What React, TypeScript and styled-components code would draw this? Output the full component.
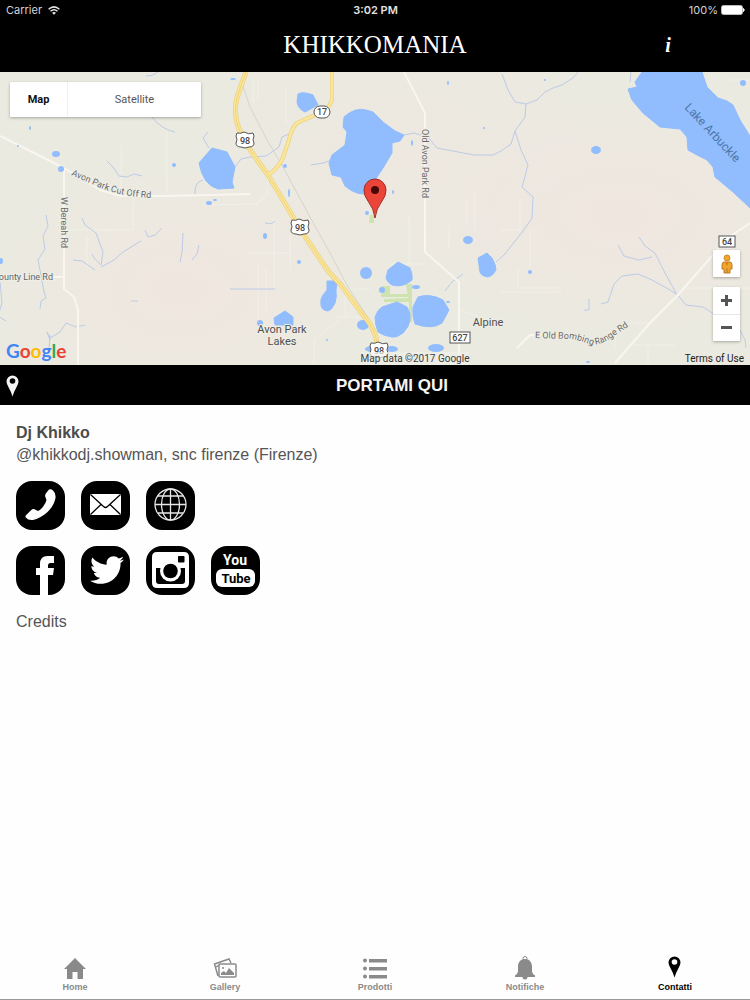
import React from "react";
import styled, { createGlobalStyle } from "styled-components";
import { FaTwitter } from "react-icons/fa";

const GlobalStyle = createGlobalStyle`
  *, *::before, *::after { box-sizing: border-box; }
  body { margin: 0; background: #fefefe; }
  button { font: inherit; color: inherit; border: 0; padding: 0; background: none; cursor: pointer; }
  a { color: inherit; text-decoration: none; }
  h1, h2, p, ul { margin: 0; padding: 0; }
  ul { list-style: none; }
  svg { display: block; }
`;

const helvetica = `"Liberation Sans", Arial, sans-serif`;
const roboto = `Roboto, "Liberation Sans", sans-serif`;

const Screen = styled.div`
  display: flex;
  flex-direction: column;
  min-height: 100vh;
  font-family: ${helvetica};
  color: #555;
  border-bottom: 1px solid #999;
`;

const Header = styled.header`
  background: #000;
  color: #fff;
`;

const StatusBar = styled.div`
  display: grid;
  grid-template-columns: 1fr auto 1fr;
  align-items: center;
  height: 20px;
  padding: 0 5px 0 6px;
  font: 400 11px/20px Inter, ${helvetica};
  color: #d4d4d4;
`;

const StatusGroup = styled.div<{ $end?: boolean }>`
  display: flex;
  align-items: center;
  gap: ${(p) => (p.$end ? 3 : 6)}px;
  justify-content: ${(p) => (p.$end ? "flex-end" : "flex-start")};
`;

const Clock = styled.time`
  font-weight: 600;
  color: #e2e2e2;
`;

const TitleBar = styled.div`
  display: grid;
  grid-template-columns: 1fr auto 1fr;
  align-items: center;
  height: 52px;
  padding-bottom: 2px;
`;

const Title = styled.h1`
  grid-column: 2;
  font: 400 25px/48px "Liberation Serif", serif;
`;

const InfoButton = styled.button`
  justify-self: end;
  width: 24px;
  margin-right: 70px;
  && { font: italic 700 20px/48px "Liberation Serif", serif; }
`;

const MapArea = styled.section`
  position: relative;
  height: 293px;
  overflow: hidden;
  background: #ecebe2;
  font-family: ${roboto};
`;

const MapCanvas = styled.svg`
  width: 100%;
  height: 100%;
`;

const MapTypeSwitch = styled.div`
  position: absolute;
  top: 10px;
  left: 10px;
  display: flex;
  background: #fff;
  border-radius: 1px;
  box-shadow: 0 1px 3px rgba(0, 0, 0, 0.3);
`;

const MapTypeButton = styled.button<{ $active?: boolean }>`
  height: 35px;
  width: ${(p) => (p.$active ? 57 : 134)}px;
  && {
    font-size: 11px;
    font-weight: ${(p) => (p.$active ? 700 : 400)};
    color: ${(p) => (p.$active ? "#111" : "#555")};
  }
  & + & { border-left: 1px solid #f1eff3; }
`;

const MapControls = styled.div`
  position: absolute;
  right: 10px;
  bottom: 24px;
  display: flex;
  flex-direction: column;
  gap: 10px;
`;

const ControlGroup = styled.div`
  width: 27px;
  background: #fff;
  border-radius: 1px;
  box-shadow: 0 1px 3px rgba(0, 0, 0, 0.3);
`;

const ControlButton = styled.button`
  display: grid;
  place-items: center;
  width: 27px;
  height: 27px;
  & + & { box-shadow: inset 0 1px #e6e6e6; }
`;

const MapCredits = styled.div`
  position: absolute;
  left: 6px;
  right: 6px;
  bottom: 0;
  display: grid;
  grid-template-columns: 1fr auto 1fr;
  align-items: end;
  font-size: 10px;
  line-height: 13px;
  color: #3c3c3c;
`;

const MapLogo = styled.svg`
  width: 72px;
  height: 28px;
`;

const MapCopyright = styled.span`
  margin-left: 80px;
  background: rgba(240, 239, 233, 0.7);
`;

const MapTerms = styled.a`
  justify-self: end;
  color: #222;
`;

const DirectionsButton = styled.button`
  display: grid;
  grid-template-columns: 28px 1fr;
  align-items: center;
  width: 100%;
  height: 40px;
  padding: 1px 0 0 6px;
  && {
    background: #000;
    color: #f4f4f4;
    font: 700 17px/39px ${helvetica};
  }
`;

const Content = styled.main`
  flex: 1;
  padding: 17px 16px;
  font-size: 16px;
  line-height: 22px;
`;

const Name = styled.h2`
  font-size: 16px;
  line-height: 22px;
  color: #4c4c4c;
`;

const TileRow = styled.ul`
  display: flex;
  flex-wrap: wrap;
  gap: 16px;
  margin-bottom: 16px;
`;

const Address = styled.p`
  margin-bottom: 15px;
`;

const TileLink = styled.a`
  display: block;
  width: 49px;
  height: 49px;
  border-radius: 16px;
  overflow: hidden;
  background: #000;
  color: #fff;
`;

const CreditsLink = styled.a`
  display: inline-block;
`;

const TabBar = styled.nav`
  display: grid;
  grid-template-columns: repeat(5, 1fr);
  height: 49px;
`;

const Tab = styled.a<{ $active?: boolean }>`
  display: flex;
  flex-direction: column;
  align-items: center;
  gap: 1px;
  padding-top: 6px;
  font: 700 9px/12px ${helvetica};
  color: ${(p) => (p.$active ? "#000" : "#8a8a8a")};
`;

const streams = [
  "M146 76Q152 77 158 72",
  "M152 117Q161 129 175 132",
  "M107 161L113 167 119 176 127 177 134 174 142 176",
  "M209 148L203 138 208 132",
  "M235 167L241 159 250 157",
  "M195 195Q194 182 203 180",
  "M250 157L266 156 279 147 282 137 291 133",
  "M311 165L323 163 329 161",
  "M404 135L414 133 428 137 437 148 453 151 474 155 493 155 501 151 511 144 515 131 525 117 526 104 515 102 508 90 502 74",
  "M526 104L537 100 545 92 553 88 562 85 573 78 578 72",
  "M515 131L521 150 528 165 522 187 533 197 532 218 523 231 504 255 496 262",
  "M631 72L630 82",
  "M46 215L48 226 43 236 45 249 38 260 41 275 44 292 46 298 41 301 40 309",
  "M82 218L85 225 96 233 103 252 101 265 94 258 92 254",
  "M73 260L82 261 95 270",
  "M101 267L114 260 123 252 136 244 141 241",
  "M145 230L148 237 155 235 162 228",
  "M183 233L182 252 180 262",
  "M199 245L197 254 192 260",
  "M0 282L2 303 -2 316 6 321",
  "M50 340L47 332 50 338 60 332 66 323 76 327 85 325",
  "M50 335L49 350",
  "M131 301h7",
  "M230 289h45",
  "M265 223Q272 225 275 221",
  "M445 291L452 282 463 274",
  "M601 304L608 302 614 284 622 276 638 274 652 280 670 290 676 294",
  "M618 245L624 256 639 260 652 257",
  "M639 237L645 246 655 253 665 273 676 293 686 305 703 307 714 314",
  "M589 299V310h-5",
  "M740 330L745 340 746 348",
];

const minorRoads = [
  "M121 145V196M167 130V193M201 205L257 204 267 194 268 176",
  "M133 196V230H66",
  "M286 86V124M253 80V102M258 78V100",
  "M274 217V289M250 253H290M258 262V320M266 268V310M290 235V270",
  "M87 236V268",
  "M467 200V224M475 190V230M449 225V248",
  "M425 264H390M409 216V264",
  "M500 230H520V202M518 268V288H560V292H500",
  "M530 230V268",
  "M685 288H750M650 323H630M632 345H675M648 345V365M615 330V350",
  "M356 308L314 339V365M335 317H365M340 289H370M345 295V315",
  "M458 310L480 317M730 80h20",
];

const mainRoads = [
  "M0 136L64 168 100 190 121 196 166 196 250 194",
  "M64 168V289L74 297 78 310V365",
  "M53 277H64",
  "M404 72L425 113V252L459 282V365",
  "M750 223L726 239 712 256 677 296 650 323 615 363",
  "M517 348L530 335 545 334",
];

const lakes = [
  "M212 148L227 152 235 167 232 182 234 188 218 189Q203 185 199 163Z",
  "M298 94Q303 91 313 95L318 105 305 112Q298 109 297 102Z",
  "M344 117Q355 107 366 110L373 112 383 122 395 131 404 135 400 141 392 143 392 153 383 168 377 177 373 187 370 193Q358 197 345 186L341 177 332 175 329 163 332 155 345 145 347 132 343 127Z",
  "M642 72L635 82 637 87 628 89 632 100 643 113 660 127 680 129 687 137 688 150 697 155 707 160 713 167 715 177 733 192 750 208V136L740 120 733 105 727 101 718 98 707 87 702 72Z",
  "M398 262L410 268Q413 275 412 280Q403 288 392 285Q387 282 386 278L388 270Z",
  "M397 302L407 307Q411 313 410 320Q409 327 403 333Q397 338 392 337Q384 336 378 332Q375 324 375 317Q378 309 382 307Z",
  "M418 297Q430 293 443 300L449 310 442 323Q432 330 415 324Q412 316 413 307Z",
  "M327 281H337L336 290Q337 297 335 303Q332 310 328 311Q321 310 321 305Q320 299 323 295L327 290Z",
  "M274 318L285 311 293 317V325H275Z",
  "M478 258L487 253 492 258Q496 265 496 270Q493 276 488 277Q481 276 480 272Z",
];

const ponds: [number, number, number, number][] = [
  [366, 273, 6, 6], [363, 325, 6, 5], [468, 240, 5, 4], [265, 236, 2, 3], [299, 262, 2, 2],
  [436, 348, 8, 4], [372, 349, 7, 3], [392, 349, 6, 3], [260, 323, 3, 3], [596, 150, 5, 4],
  [743, 83, 3, 3], [56, 154, 4, 3], [61, 169, 3, 3], [174, 165, 2, 2], [209, 203, 3, 2],
  [215, 200, 2, 1], [30, 128, 1, 2], [18, 146, 1, 1], [1, 261, 2, 3], [382, 290, 3, 3],
  [416, 287, 4, 2], [289, 193, 1, 4], [285, 166, 2, 2], [393, 192, 1, 2], [367, 213, 2, 2],
  [412, 143, 1, 3], [448, 83, 1, 2], [484, 128, 1, 1], [530, 272, 2, 2], [233, 79, 3, 1],
  [545, 80, 1, 1], [588, 362, 2, 1], [448, 302, 2, 1], [327, 340, 1, 1],
];

function UsShield({ x, y }: { x: number; y: number }) {
  return (
    <g transform={`translate(${x} ${y})`}>
      <path d="M-8-7Q-4-6-1-8Q4-5 8-7L9-4Q7 0 9 3Q9 7 4 7L0 8L-4 7Q-9 7-9 3Q-7 0-9-4Z" fill="#fff" stroke="#555" strokeWidth="1" />
      <text y="4" textAnchor="middle" fontSize="9" fontWeight="500" fill="#444">98</text>
    </g>
  );
}

function RoadBox({ x, y, w, label }: { x: number; y: number; w: number; label: string }) {
  return (
    <g>
      <rect x={x} y={y} width={w} height="11" fill="#fff" stroke="#555" />
      <text x={x + w / 2} y={y + 9} textAnchor="middle" fontSize="9" fontWeight="500" fill="#444">{label}</text>
    </g>
  );
}

function MapDrawing() {
  const highway98 = "M246 72Q240 88 237 98Q233 114 239 129Q246 146 268 175L293 217 306 238 328 271 341 285 363 315Q373 326 376 338L378 350";
  const highway17 = "M332 72V98Q332 106 322 112L297 123Q291 129 289 140L282 160Q276 170 268 175";
  return (
    <MapCanvas viewBox="0 72 750 293" preserveAspectRatio="xMidYMid slice" role="img" aria-label="Map of Avon Park Lakes">
      <defs>
        <radialGradient id="rose">
          <stop offset="0" stopColor="#f0e6e0" />
          <stop offset="1" stopColor="#f0e6e0" stopOpacity="0" />
        </radialGradient>
        <path id="avonPath" d="M71 175L92 184Q118 197 154 198" />
        <path id="rangePath" d="M535 338L572 339Q582 341 592 345Q604 344 614 336L640 319" />
      </defs>
      <rect y="72" width="750" height="293" fill="#ebeae0" />
      <ellipse cx="180" cy="290" rx="180" ry="120" fill="url(#rose)" />
      <ellipse cx="620" cy="215" rx="210" ry="120" fill="url(#rose)" />
      <ellipse cx="400" cy="160" rx="200" ry="140" fill="url(#rose)" opacity=".5" />
      <g fill="none" stroke="#f1f0e8" strokeWidth="1">
        {minorRoads.map((d) => <path key={d} d={d} />)}
      </g>
      <g fill="none" stroke="#bccbe8" strokeWidth="1" strokeLinejoin="round">
        {streams.map((d) => <path key={d} d={d} />)}
      </g>
      <g fill="none" stroke="#f8f6ee" strokeWidth="2" strokeLinejoin="round">
        {mainRoads.map((d) => <path key={d} d={d} />)}
      </g>
      <path d="M241 80L250 107 266 138 283 167 310 217 330 253 348 287 368 318" fill="none" stroke="#d7d3cd" />
      <g fill="#cfe3b1">
        <path d="M370 215h4v8h-5zM382 286h8v8h-8zM381 294h28v3h-28zM384 299l26-1 2 4h-28zM406 284h6v38h-3v-18z" />
      </g>
      <g fill="#91bdfe">
        <g stroke="#91bdfe" strokeLinejoin="round">
          {lakes.map((d) => <path key={d} d={d} />)}
        </g>
        {ponds.map(([x, y, rx, ry]) => <ellipse key={`${x}-${y}`} cx={x} cy={y} rx={rx} ry={ry} />)}
      </g>
      <g fill="none" strokeLinejoin="round">
        <path d={highway98} stroke="#e5cb7b" strokeWidth="5" />
        <path d={highway17} stroke="#e5cb7b" strokeWidth="4" />
        <path d={highway17} stroke="#fbe596" strokeWidth="3" />
        <path d={highway98} stroke="#fbe596" strokeWidth="4" />
        <path d={highway98} stroke="#efd480" strokeWidth="1" />
      </g>
      <UsShield x={245} y={140} />
      <UsShield x={300} y={227} />
      <UsShield x={379} y={350} />
      <rect x="314" y="106" width="16" height="12" rx="6" fill="#fff" stroke="#555" />
      <text x="322" y="115" textAnchor="middle" fontSize="9" fontWeight="500" fill="#444">17</text>
      <RoadBox x={719} y={236} w={16} label="64" />
      <RoadBox x={450} y={332} w={20} label="627" />
      <g fontSize="9" fill="#666" stroke="#efeee6" strokeWidth="2" paintOrder="stroke">
        <text><textPath href="#avonPath">Avon Park Cut Off Rd</textPath></text>
        <text><textPath href="#rangePath">E Old Bombing Range Rd</textPath></text>
        <text transform="translate(61 197) rotate(90)">W Bereah Rd</text>
        <text transform="translate(422 129) rotate(90)">Old Avon Park Rd</text>
        <text x="53" y="280" textAnchor="end">County Line Rd</text>
      </g>
      <g fontSize="11" fill="#505050" stroke="#efeee6" strokeWidth="2" paintOrder="stroke" textAnchor="middle">
        <text x="282" y="333">Avon Park</text>
        <text x="282" y="345">Lakes</text>
        <text x="488" y="326">Alpine</text>
      </g>
      <text transform="translate(684 108) rotate(47)" fontSize="12" fill="#4c76a8">Lake Arbuckle</text>
      <path d="M375 218Q374 209 368 201Q364 196 364 190A11 11 0 0 1 386 190Q386 196 382 201Q376 209 375 218Z" fill="#ea4538" stroke="#a32e25" strokeWidth="1" />
      <circle cx="375" cy="190" r="4" fill="#450a07" />
    </MapCanvas>
  );
}

function GoogleLogo() {
  return (
    <MapLogo viewBox="0 0 72 28" role="img" aria-label="Google">
      <text x="0" y="21" fontFamily="Lato, sans-serif" fontSize="19" fontWeight="700">
        <tspan fill="#4285f4">G</tspan>
        <tspan fill="#ea4335">o</tspan>
        <tspan fill="#fbbc05">o</tspan>
        <tspan fill="#4285f4">g</tspan>
        <tspan fill="#34a853">l</tspan>
        <tspan fill="#ea4335">e</tspan>
      </text>
    </MapLogo>
  );
}

function Pegman() {
  return (
    <svg width="14" height="20" viewBox="0 0 14 20" aria-hidden="true">
      <path d="M4 8Q2 8 2 11V15H4V19H10V15H12V11Q12 8 10 8Z" fill="#f2a52b" stroke="#b97b28" />
      <circle cx="7" cy="4" r="3" fill="#f2a52b" stroke="#c98a2c" />
      <path d="M5 8l2 4 2-4z" fill="#d98216" />
      <path d="M7 14v5" stroke="#b97b28" />
    </svg>
  );
}

function PinIcon({ hole }: { hole: string }) {
  return (
    <svg width="13" height="22" viewBox="0 0 13 22" aria-hidden="true">
      <path d="M6.500 21.500Q5.500 17.500 2.800 12.700Q.5 9 .5 6.500A6 6 0 0 1 12.500 6.500Q12.500 9 10.200 12.700Q7.500 17.500 6.500 21.500Z" fill="currentColor" />
      <circle cx="6.500" cy="6" r="2.800" fill={hole} />
    </svg>
  );
}

function WifiIcon() {
  return (
    <svg width="12" height="9" viewBox="0 0 12 9" fill="none" stroke="#e6e6e6" strokeWidth="1.500" aria-hidden="true">
      <path d="M.6 3.200Q6-1.400 11.400 3.200M2.500 5.300Q6 2.300 9.500 5.300" />
      <path d="M6 8.800L4 6.800Q6 5.300 8 6.800Z" fill="#e6e6e6" stroke="none" />
    </svg>
  );
}

function BatteryIcon() {
  return (
    <svg width="24" height="10" viewBox="0 0 24 10" aria-hidden="true">
      <rect x=".5" y=".5" width="21" height="9" rx="2" fill="#fff" stroke="#bbb" />
      <path d="M22.500 3.500Q24 5 22.500 6.500Z" fill="#fff" stroke="#fff" />
    </svg>
  );
}

const tiles = {
  phone: (
    <svg viewBox="0 0 49 49" fill="currentColor" aria-hidden="true">
      <path d="M33 8.500Q35 7.500 37 9.500Q40 12 39.500 17Q38 25 31 31.500Q24 37.500 17 39Q12 39.500 9.800 36.500Q8.800 34.800 10.500 33.700L15.300 29Q16.800 27.500 18.500 28.200L22 30Q25 28.500 27.200 25.500Q29.800 22 30.500 19L29.200 15.500Q28.800 13.500 30.200 12Z" />
    </svg>
  ),
  mail: (
    <svg viewBox="0 0 49 49" fill="none" stroke="#000" strokeWidth="1.300" aria-hidden="true">
      <rect x="9" y="13" width="31" height="21" rx="1" fill="#fff" stroke="none" />
      <path d="M9.500 13.500L22.500 25.500Q24.500 27.500 26.500 25.500L39.500 13.500M9.500 33.500L20 23.500M39.500 33.500L29 23.500" />
    </svg>
  ),
  web: (
    <svg viewBox="0 0 49 49" fill="none" stroke="#e8e8e8" strokeWidth="1.300" aria-hidden="true">
      <circle cx="24.500" cy="23.500" r="15.500" />
      <ellipse cx="24.500" cy="23.500" rx="9" ry="15.500" />
      <path d="M24.500 8V39M9 23.500H40M12 15H37M12 32H37" />
    </svg>
  ),
  facebook: (
    <svg viewBox="0 0 49 49" fill="currentColor" aria-hidden="true">
      <path d="M24 49V29H20V22H24V18Q24 10 31.500 10H38V17H34.500Q32 17 32 19.500V22H38L37 29H32V49Z" />
    </svg>
  ),
  instagram: (
    <svg viewBox="0 0 49 49" aria-hidden="true">
      <path fill="#fff" fillRule="evenodd" d="M11 6H38Q43 6 43 11V37Q43 42 38 42H11Q6 42 6 37V11Q6 6 11 6ZM10 22V35Q10 38 13 38H36Q39 38 39 35V22H33.500V25A9 9 0 0 1 15.500 25V22Z" />
      <circle cx="24.500" cy="25" r="10.500" fill="#fff" />
      <circle cx="24.500" cy="25" r="7.300" fill="#000" />
      <rect x="32" y="10" width="6.500" height="6.500" rx=".8" fill="#000" />
    </svg>
  ),
  youtube: (
    <svg viewBox="0 0 49 49" fontFamily={roboto} fontWeight="700" textAnchor="middle" aria-hidden="true">
      <text x="24" y="19" fontSize="14" fill="#fff">You</text>
      <rect x="5" y="23" width="39" height="18" rx="6" fill="#fff" />
      <text x="25" y="37" fontSize="13" fill="#000">Tube</text>
    </svg>
  ),
};

const TwitterMark = styled(FaTwitter)`
  width: 34px;
  height: 34px;
  margin: 7px 0 0 9px;
`;

const tabs = [
  {
    label: "Home",
    icon: <path d="M12 2L23 13H20V23H14.500V16H9.500V23H4V13H1Z" fill="currentColor" />,
  },
  {
    label: "Gallery",
    icon: (
      <g fill="none" stroke="currentColor" strokeWidth="1.500">
        <path d="M5 20L1.500 8L16 3L18 7M3 11L6 9" />
        <rect x="6" y="8" width="17" height="13" rx="1" fill="#fefefe" />
        <path d="M8 19V17L11 15L13 17L16 12L21 17V19Z" fill="currentColor" stroke="none" />
        <circle cx="10" cy="12" r="1" fill="currentColor" stroke="none" />
      </g>
    ),
  },
  {
    label: "Prodotti",
    icon: (
      <g fill="currentColor">
        <circle cx="2" cy="4.500" r="2" />
        <circle cx="2" cy="12.500" r="2" />
        <circle cx="2" cy="20.500" r="2" />
        <path d="M6 3H24V6.500H6ZM6 11H24V14.500H6ZM6 19H24V22.500H6Z" />
      </g>
    ),
  },
  {
    label: "Notifiche",
    icon: (
      <>
        <circle cx="12" cy="2.500" r="2" fill="none" stroke="currentColor" />
        <path d="M12 3C16.500 3 19 6.500 19 10.500V15.500Q19.500 18.500 22 19.500V21H14.500Q14.500 23.500 12 23.500Q9.500 23.500 9.500 21H2V19.500Q4.500 18.500 5 15.500V10.500C5 6.500 7.500 3 12 3Z" fill="currentColor" />
      </>
    ),
  },
];

function Tile({ label, children }: { label: string; children: React.ReactNode }) {
  return (
    <li>
      <TileLink href="#" aria-label={label}>{children}</TileLink>
    </li>
  );
}

export default function App() {
  return (
    <Screen>
      <GlobalStyle />
      <Header>
        <StatusBar>
          <StatusGroup>Carrier <WifiIcon /></StatusGroup>
          <Clock>3:02 PM</Clock>
          <StatusGroup $end>100% <BatteryIcon /></StatusGroup>
        </StatusBar>
        <TitleBar>
          <Title>KHIKKOMANIA</Title>
          <InfoButton>i</InfoButton>
        </TitleBar>
      </Header>

      <MapArea>
        <MapDrawing />
        <MapTypeSwitch>
          <MapTypeButton $active>Map</MapTypeButton>
          <MapTypeButton>Satellite</MapTypeButton>
        </MapTypeSwitch>
        <MapControls>
          <ControlGroup>
            <ControlButton aria-label="Street view"><Pegman /></ControlButton>
          </ControlGroup>
          <ControlGroup>
            <ControlButton aria-label="Zoom in">
              <svg width="11" height="11" viewBox="0 0 11 11"><path d="M0 5.500H11M5.500 0V11" stroke="#555" strokeWidth="3" /></svg>
            </ControlButton>
            <ControlButton aria-label="Zoom out">
              <svg width="11" height="11" viewBox="0 0 11 11"><path d="M0 5.500H11" stroke="#555" strokeWidth="3" /></svg>
            </ControlButton>
          </ControlGroup>
        </MapControls>
        <MapCredits>
          <GoogleLogo />
          <MapCopyright>Map data ©2017 Google</MapCopyright>
          <MapTerms href="#">Terms of Use</MapTerms>
        </MapCredits>
      </MapArea>

      <DirectionsButton>
        <PinIcon hole="#000" />
        <span>PORTAMI QUI</span>
      </DirectionsButton>

      <Content>
        <Name>Dj Khikko</Name>
        <Address>@khikkodj.showman, snc firenze (Firenze)</Address>
        <TileRow>
          <Tile label="Phone">{tiles.phone}</Tile>
          <Tile label="Email">{tiles.mail}</Tile>
          <Tile label="Website">{tiles.web}</Tile>
        </TileRow>
        <TileRow>
          <Tile label="Facebook">{tiles.facebook}</Tile>
          <Tile label="Twitter"><TwitterMark /></Tile>
          <Tile label="Instagram">{tiles.instagram}</Tile>
          <Tile label="YouTube">{tiles.youtube}</Tile>
        </TileRow>
        <CreditsLink href="#">Credits</CreditsLink>
      </Content>

      <TabBar>
        {tabs.map((tab) => (
          <Tab key={tab.label} href="#">
            <svg width="24" height="24" viewBox="0 0 24 24" aria-hidden="true">{tab.icon}</svg>
            {tab.label}
          </Tab>
        ))}
        <Tab href="#" $active>
          <svg width="24" height="24" viewBox="-5 0 24 24" aria-hidden="true"><PinIcon hole="#fefefe" /></svg>
          Contatti
        </Tab>
      </TabBar>
    </Screen>
  );
}
